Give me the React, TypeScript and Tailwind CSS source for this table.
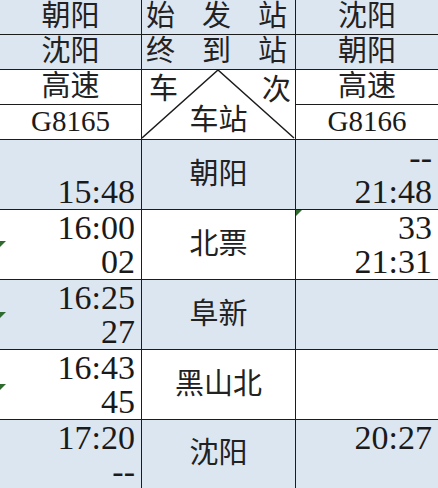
const BLUE = "bg-[#dce6f1]";
const LINE = "border-[#1c1c1c]";

type Row = { left: [string, string]; station: string; right: [string, string]; blue: boolean };

const rows: Row[] = [
  { left: ["", "15:48"], station: "朝阳", right: ["--", "21:48"], blue: true },
  { left: ["16:00", "02"], station: "北票", right: ["33", "21:31"], blue: false },
  { left: ["16:25", "27"], station: "阜新", right: ["", ""], blue: true },
  { left: ["16:43", "45"], station: "黑山北", right: ["", ""], blue: false },
  { left: ["17:20", "--"], station: "沈阳", right: ["20:27", ""], blue: true },
];

function Spread({ chars }: { chars: string[] }) {
  return (
    <div className="flex h-full items-center justify-between pl-[4px] pr-[8px]">
      {chars.map((c, i) => (
        <span key={i}>{c}</span>
      ))}
    </div>
  );
}

// two stacked time lines, right aligned like the spreadsheet cells
function Times({ lines }: { lines: [string, string] }) {
  return (
    <div className="flex h-full flex-col pr-[6px] text-right font-['Liberation_Serif',serif] text-[34px] text-[#1a1a1a]">
      <div className="h-[35px] leading-[35px]">{lines[0]}</div>
      <div className="h-[33px] leading-[33px]">{lines[1]}</div>
    </div>
  );
}

function Marker({ top, left }: { top: number; left: number }) {
  return (
    <span
      className="absolute h-0 w-0 border-t-[6px] border-r-[6px] border-t-[#2f6b2f] border-r-transparent"
      style={{ top, left }}
    />
  );
}

export default function App() {
  return (
    <div className="relative h-[488px] w-[438px] overflow-hidden bg-white font-['Liberation_Serif','Noto_Sans_CJK_SC',serif] text-[#222]">
      <div className="grid grid-cols-[142px_154px_142px] grid-rows-[35px_35px_35px_35px]">
        {/* 始发站 / 终到站 */}
        <div className={`${BLUE} border-r border-b ${LINE} flex items-center justify-center text-[29px]`}>朝阳</div>
        <div className={`${BLUE} border-r border-b ${LINE} text-[29px]`}>
          <Spread chars={["始", "发", "站"]} />
        </div>
        <div className={`${BLUE} border-b ${LINE} flex items-center justify-center text-[29px]`}>沈阳</div>

        <div className={`${BLUE} border-r border-b ${LINE} flex items-center justify-center text-[29px]`}>沈阳</div>
        <div className={`${BLUE} border-r border-b ${LINE} text-[29px]`}>
          <Spread chars={["终", "到", "站"]} />
        </div>
        <div className={`${BLUE} border-b ${LINE} flex items-center justify-center text-[29px]`}>朝阳</div>

        {/* 车次 / 车站 */}
        <div className={`border-r border-b ${LINE} flex items-center justify-center text-[29px]`}>高速</div>
        <div className={`relative row-span-2 border-r border-b ${LINE} text-[29px]`}>
          <svg className="absolute inset-0 h-full w-full" viewBox="0 0 153 69" preserveAspectRatio="none">
            <polyline points="0,68 76,0 152,68" fill="none" stroke="#1c1c1c" strokeWidth="1.5" />
          </svg>
          <span className="absolute left-[7px] top-[2px] leading-[34px]">车</span>
          <span className="absolute right-[4px] top-[3px] leading-[34px]">次</span>
          <span className="absolute bottom-[2px] left-0 right-0 text-center leading-[34px]">车站</span>
        </div>
        <div className={`border-b ${LINE} flex items-center justify-center text-[29px]`}>高速</div>

        <div className={`border-r border-b ${LINE} flex items-center justify-center text-[29px] text-[#1a1a1a]`}>G8165</div>
        <div className={`border-b ${LINE} flex items-center justify-center text-[29px] text-[#1a1a1a]`}>G8166</div>
      </div>

      <div className="grid grid-cols-[142px_154px_142px]">
        {rows.map((r, i) => {
          const bg = r.blue ? BLUE : "bg-white";
          const last = i === rows.length - 1;
          const cell = last ? "h-[68px]" : "h-[70px] border-b";
          return [
            <div key={`l${i}`} className={`${bg} border-r ${cell} ${LINE}`}>
              <Times lines={r.left} />
            </div>,
            <div key={`s${i}`} className={`${bg} border-r ${cell} ${LINE} flex items-center justify-center text-[29px]`}>
              {r.station}
            </div>,
            <div key={`r${i}`} className={`${bg} ${cell} ${LINE}`}>
              <Times lines={r.right} />
            </div>,
          ];
        })}
      </div>

      <Marker top={241} left={0} />
      <Marker top={312} left={0} />
      <Marker top={384} left={0} />
      <Marker top={210} left={296} />
    </div>
  );
}
